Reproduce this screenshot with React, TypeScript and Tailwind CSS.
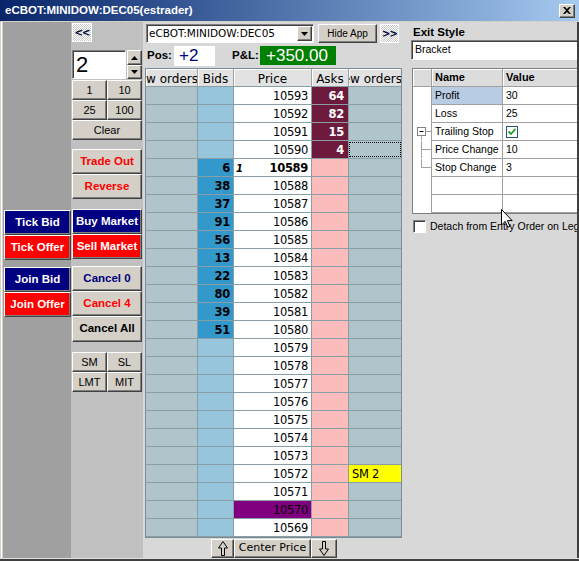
import React from 'react';

const raised =
  'border border-t-white border-l-white border-r-[#404040] border-b-[#404040] shadow-[inset_-1px_-1px_0_#808080]';
const sunken =
  'border border-t-[#808080] border-l-[#808080] border-r-white border-b-white shadow-[inset_1px_1px_0_#404040]';
const ui = "font-['DejaVu_Sans',Verdana,sans-serif]";
const sans = "font-['Liberation_Sans',Arial,sans-serif]";

const prices = Array.from({ length: 25 }, (_, i) => 10593 - i);
const bids: Record<number, number> = {
  10589: 6, 10588: 38, 10587: 37, 10586: 91, 10585: 56,
  10584: 13, 10583: 22, 10582: 80, 10581: 39, 10580: 51,
};
const asks: Record<number, number> = { 10593: 64, 10592: 82, 10591: 15, 10590: 4 };

const props = [
  { name: 'Profit', value: '30', selected: true },
  { name: 'Loss', value: '25' },
  { name: 'Trailing Stop', value: 'check', tree: 'root' },
  { name: 'Price Change', value: '10', tree: 'mid' },
  { name: 'Stop Change', value: '3', tree: 'last' },
  { name: '', value: '' },
  { name: '', value: '' },
];

function Btn({ className, children }: { className: string; children?: React.ReactNode }) {
  return (
    <div className={`${raised} flex items-center justify-center whitespace-nowrap ${className}`}>
      {children}
    </div>
  );
}

function Arrow({ down }: { down?: boolean }) {
  return (
    <svg width="10" height="15" viewBox="0 0 10 15" className={down ? 'rotate-180' : ''}>
      <path d="M5 0.5 L9.5 7 L6.5 7 L6.5 14.5 L3.5 14.5 L3.5 7 L0.5 7 Z" fill="#d4d0c8" stroke="#000" strokeWidth="1" />
    </svg>
  );
}

function TreeLines({ kind }: { kind?: string }) {
  if (!kind) return null;
  return (
    <svg width="18" height="17" viewBox="0 0 18 17">
      {kind === 'root' && (
        <>
          <rect x="4.5" y="4.5" width="8" height="8" fill="#fff" stroke="#808080" />
          <line x1="6.5" y1="8.5" x2="10.5" y2="8.5" stroke="#000" />
          <line x1="12.5" y1="8.5" x2="18" y2="8.5" stroke="#a0a0a0" />
          <line x1="8.5" y1="12.5" x2="8.5" y2="17" stroke="#a0a0a0" />
        </>
      )}
      {kind === 'mid' && (
        <>
          <line x1="8.5" y1="0" x2="8.5" y2="17" stroke="#a0a0a0" />
          <line x1="8.5" y1="8.5" x2="18" y2="8.5" stroke="#a0a0a0" />
        </>
      )}
      {kind === 'last' && (
        <>
          <line x1="8.5" y1="0" x2="8.5" y2="8.5" stroke="#a0a0a0" />
          <line x1="8.5" y1="8.5" x2="18" y2="8.5" stroke="#a0a0a0" />
        </>
      )}
    </svg>
  );
}

function Ladder() {
  return (
    <div className={`ml-[2px] w-[257px] h-[470px] border border-[#7c8c94] flex flex-col ${ui} text-[11.5px] tracking-[-0.3px] text-black`}>
      {/* header */}
      <div className="flex h-[18px] border-b border-[#8a9ea6] bg-[#e2e2e2] text-[12px] tracking-normal">
        <div className="w-[52px] pt-[2px] border-r border-[#a0a0a0] shadow-[inset_1px_1px_0_#fff] flex items-center justify-end overflow-hidden whitespace-nowrap">
          <span className="shrink-0 -mr-[1px]">New orders</span>
        </div>
        <div className="w-[36px] pt-[2px] border-r border-[#a0a0a0] shadow-[inset_1px_1px_0_#fff] flex items-center justify-center">Bids</div>
        <div className="w-[78px] pt-[2px] border-r border-[#a0a0a0] shadow-[inset_1px_1px_0_#fff] flex items-center justify-center">Price</div>
        <div className="w-[37px] pt-[2px] border-r border-[#a0a0a0] shadow-[inset_1px_1px_0_#fff] flex items-center justify-center">Asks</div>
        <div className="w-[52px] pt-[2px] shadow-[inset_1px_1px_0_#fff] flex items-center justify-end overflow-hidden whitespace-nowrap">
          <span className="shrink-0 -mr-[1px]">New orders</span>
        </div>
      </div>
      {/* rows */}
      {prices.map((p) => {
        const b = bids[p];
        const a = asks[p];
        return (
          <div key={p} className="flex h-[18px] border-b border-[#8a9ea6]">
            <div className="w-[52px] border-r border-[#8a9ea6] bg-[#b0c4cc]" />
            <div
              className={`w-[36px] pt-[2px] border-r border-[#8a9ea6] flex items-center justify-end pr-[3px] font-bold ${
                b ? 'bg-[#3399cc]' : 'bg-[#96c5dc]'
              }`}
            >
              {b}
            </div>
            <div
              className={`w-[78px] pt-[2px] border-r border-[#8a9ea6] flex items-center pr-[3px] ${
                p === 10570 ? 'bg-[#800080]' : 'bg-white'
              } ${p === 10589 ? 'justify-between pl-[2px] font-bold' : 'justify-end'}`}
            >
              {p === 10589 && <span className="italic text-[10px]">1</span>}
              <span>{p}</span>
            </div>
            <div
              className={`w-[37px] pt-[2px] border-r border-[#8a9ea6] flex items-center justify-end pr-[4px] font-bold ${
                a ? 'bg-[#6e1a3c] text-white' : 'bg-[#fdbcbc]'
              }`}
            >
              {a}
            </div>
            <div className={`flex-1 flex items-center ${p === 10572 ? 'bg-[#ffff00] pl-[3px] pt-[2px]' : 'bg-[#b0c4cc]'}`}>
              {p === 10572 && 'SM 2'}
              {p === 10590 && <div className="w-full h-[15px] border border-dotted border-black" />}
            </div>
          </div>
        );
      })}
    </div>
  );
}

export default function App() {
  return (
    <div className="relative w-[579px] h-[561px] overflow-hidden flex flex-col bg-[#d4d0c8]">
      {/* Title bar */}
      <div className="h-[21px] shrink-0 flex items-center justify-between bg-linear-to-r from-[#0a246a] to-[#a6caf0] pl-[5px] pr-[4px]">
        <span className={`${sans} text-[11.5px] font-bold text-white`}>eCBOT:MINIDOW:DEC05(estrader)</span>
        <div className={`${raised} w-[16px] h-[14px] bg-[#d4d0c8] flex items-center justify-center`}>
          <svg width="8" height="7" viewBox="0 0 8 7">
            <path d="M0 0 L2 0 L4 2 L6 0 L8 0 L5 3.5 L8 7 L6 7 L4 5 L2 7 L0 7 L3 3.5 Z" fill="#000" />
          </svg>
        </div>
      </div>

      <div className="flex flex-1 border-t border-[#d4d0c8] min-h-0">
        {/* left frame */}
        <div className="w-[3px] bg-white border-l border-r border-[#d4d0c8]" />

        {/* left column */}
        <div className={`w-[68px] bg-[#a0a0a0] flex flex-col ${sans} text-[11.5px] font-bold text-white`}>
          <Btn className="mt-[188px] ml-[1px] w-[67px] h-[25px] bg-[#000080]">Tick Bid</Btn>
          <Btn className="ml-[1px] w-[67px] h-[25px] bg-[#ff0000]">Tick Offer</Btn>
          <Btn className="mt-[7px] ml-[1px] w-[67px] h-[25px] bg-[#000080]">Join Bid</Btn>
          <Btn className="ml-[1px] w-[67px] h-[25px] bg-[#ff0000]">Join Offer</Btn>
        </div>

        {/* middle column */}
        <div className={`w-[72px] bg-[#c0c0c0] flex flex-col ${sans} text-[11px] text-black`}>
          <div className="mt-[1px] ml-[1px] w-[20px] h-[19px] border border-white flex items-center justify-center bg-[repeating-conic-gradient(#c8c8c8_0_25%,#ffffff_0_50%)] bg-[length:2px_2px]">
            <span className={`${ui} text-[10px] font-bold text-[#000040] tracking-[-1px]`}>&lt;&lt;</span>
          </div>
          <div className="mt-[8px] ml-[1px] flex h-[29px]">
            <div className={`${sunken} w-[54px] h-full bg-white flex items-center pl-[3px] text-[22px] leading-none`}>2</div>
            <div className="ml-[1px] flex flex-col w-[15px] h-full">
              <Btn className="h-[15px] bg-[#d4d0c8]">
                <svg width="7" height="4" viewBox="0 0 7 4"><path d="M3.5 0 L7 4 L0 4 Z" fill="#000" /></svg>
              </Btn>
              <Btn className="h-[14px] bg-[#d4d0c8]">
                <svg width="7" height="4" viewBox="0 0 7 4"><path d="M0 0 L7 0 L3.5 4 Z" fill="#000" /></svg>
              </Btn>
            </div>
          </div>
          <div className="mt-[1px] ml-[1px] grid grid-cols-2 w-[70px]">
            <Btn className="h-[20px] bg-[#d4d0c8]">1</Btn>
            <Btn className="h-[20px] bg-[#d4d0c8]">10</Btn>
            <Btn className="h-[20px] bg-[#d4d0c8]">25</Btn>
            <Btn className="h-[20px] bg-[#d4d0c8]">100</Btn>
          </div>
          <Btn className="ml-[1px] w-[70px] h-[20px] bg-[#d4d0c8]">Clear</Btn>
          <div className="font-bold text-[11.5px]">
            <Btn className="mt-[9px] ml-[1px] w-[70px] h-[25px] bg-[#d4d0c8] text-[#ff0000]">Trade Out</Btn>
            <Btn className="ml-[1px] w-[70px] h-[25px] bg-[#d4d0c8] text-[#ff0000]">Reverse</Btn>
            <Btn className="mt-[10px] ml-[1px] w-[70px] h-[25px] bg-[#000080] text-white">Buy Market</Btn>
            <Btn className="ml-[1px] w-[70px] h-[25px] bg-[#ff0000] text-white">Sell Market</Btn>
            <Btn className="mt-[7px] ml-[1px] w-[70px] h-[25px] bg-[#d4d0c8] text-[#000080]">Cancel 0</Btn>
            <Btn className="ml-[1px] w-[70px] h-[25px] bg-[#d4d0c8] text-[#ff0000]">Cancel 4</Btn>
            <Btn className="ml-[1px] w-[70px] h-[26px] bg-[#d4d0c8] text-black">Cancel All</Btn>
          </div>
          <div className="mt-[10px] ml-[1px] grid grid-cols-2 w-[70px]">
            <Btn className="h-[20px] bg-[#d4d0c8]">SM</Btn>
            <Btn className="h-[20px] bg-[#d4d0c8]">SL</Btn>
            <Btn className="h-[20px] bg-[#d4d0c8]">LMT</Btn>
            <Btn className="h-[20px] bg-[#d4d0c8]">MIT</Btn>
          </div>
        </div>

        {/* ladder area */}
        <div className="w-[260px] bg-[#d8d8d8] flex flex-col">
          <div className="mt-[2px] h-[19px] flex">
            <div className={`${sunken} ml-[3px] w-[168px] h-full bg-white flex items-center justify-between pl-[2px] pr-[1px]`}>
              <span className={`${ui} text-[10.5px] text-black`}>eCBOT:MINIDOW:DEC05</span>
              <Btn className="w-[15px] h-[15px] bg-[#d4d0c8]">
                <svg width="7" height="4" viewBox="0 0 7 4"><path d="M0 0 L7 0 L3.5 4 Z" fill="#000" /></svg>
              </Btn>
            </div>
            <Btn className={`ml-[4px] w-[59px] h-full bg-[#d4d0c8] ${sans} text-[10px] text-black`}>Hide App</Btn>
            <div className="ml-[3px] w-[19px] h-full border border-white flex items-center justify-center bg-[repeating-conic-gradient(#c8c8c8_0_25%,#ffffff_0_50%)] bg-[length:2px_2px]">
              <span className={`${ui} text-[10px] font-bold text-[#000040] tracking-[-1px]`}>&gt;&gt;</span>
            </div>
          </div>
          <div className={`h-[25px] flex items-center ${sans}`}>
            <span className="ml-[4px] w-[27px] text-[11.5px] font-bold text-black">Pos:</span>
            <div className="w-[41px] h-[20px] bg-white flex items-center pl-[5px] text-[17px] text-[#000080]">+2</div>
            <span className="ml-[17px] w-[28px] text-[11.5px] font-bold text-black">P&amp;L:</span>
            <div className="w-[76px] h-[19px] bg-[#008000] flex items-center pl-[6px] text-[17px] text-white">+350.00</div>
          </div>
          <Ladder />
          <div className={`mt-[1px] ml-[68px] flex h-[19px] ${ui} text-[11px] text-black`}>
            <Btn className="w-[23px] h-full bg-[#d4d0c8]"><Arrow /></Btn>
            <Btn className="w-[77px] h-full bg-[#d4d0c8]">Center Price</Btn>
            <Btn className="w-[26px] h-full bg-[#d4d0c8]"><Arrow down /></Btn>
          </div>
        </div>

        {/* right panel */}
        <div className={`w-[174px] bg-[#d8d8d8] flex flex-col overflow-hidden ${sans} text-[10.5px] text-black`}>
          <div className="mt-[4px] h-[14px] pl-[10px] flex items-center text-[11.5px] font-bold">Exit Style</div>
          <div className={`${sunken} ml-[8px] w-[200px] h-[20px] shrink-0 bg-white flex items-center pl-[3px]`}>Bracket</div>
          <div className="mt-[8px] ml-[9px] w-[200px] h-[146px] shrink-0 border border-[#808080] bg-white flex flex-col">
            <div className="flex h-[18px] bg-[#dcdcdc] border-b border-[#a0a0a0] font-bold text-[11px]">
              <div className="w-[19px] border-r border-[#a0a0a0] shadow-[inset_1px_1px_0_#fff]" />
              <div className="w-[71px] border-r border-[#a0a0a0] shadow-[inset_1px_1px_0_#fff] flex items-center pl-[3px]">Name</div>
              <div className="flex-1 shadow-[inset_1px_1px_0_#fff] flex items-center pl-[3px]">Value</div>
            </div>
            {props.map((r, i) => (
              <div key={i} className="flex h-[18px]">
                <div className="w-[19px] border-r border-[#a0a0a0]">
                  <TreeLines kind={r.tree} />
                </div>
                <div
                  className={`w-[71px] border-r border-b border-[#a0a0a0] flex items-center pl-[3px] whitespace-nowrap ${
                    r.selected ? 'bg-[#b8cce4]' : ''
                  }`}
                >
                  {r.name}
                </div>
                <div className="flex-1 border-b border-[#a0a0a0] flex items-center pl-[3px]">
                  {r.value === 'check' ? (
                    <div className="w-[12px] h-[12px] border border-[#1c5180] bg-white flex items-center justify-center">
                      <svg width="8" height="7" viewBox="0 0 8 7">
                        <path d="M0.5 3.5 L3 6 L7.5 0.8" fill="none" stroke="#21a121" strokeWidth="1.8" />
                      </svg>
                    </div>
                  ) : (
                    r.value
                  )}
                </div>
              </div>
            ))}
          </div>
          <div className="mt-[5px] ml-[10px] flex items-center whitespace-nowrap">
            <div className={`${sunken} w-[13px] h-[13px] bg-white shrink-0`} />
            <span className="ml-[4px]">Detach from Entry Order on Leg Fill</span>
          </div>
        </div>

        {/* right frame */}
        <div className="w-[2px] bg-[#404040]" />
      </div>

      {/* bottom frame */}
      <div className="h-[3px] shrink-0 border-t border-[#e0e0e0] bg-[#404040]" />

      {/* mouse pointer */}
      <svg className="absolute left-[501px] top-[209px]" width="12" height="19" viewBox="0 0 12 19">
        <path d="M0.5 0.5 L0.5 16 L4.2 12.4 L6.8 18.2 L8.9 17.3 L6.4 11.6 L11.2 11.6 Z" fill="#fff" stroke="#000" strokeWidth="1" />
      </svg>
    </div>
  );
}
